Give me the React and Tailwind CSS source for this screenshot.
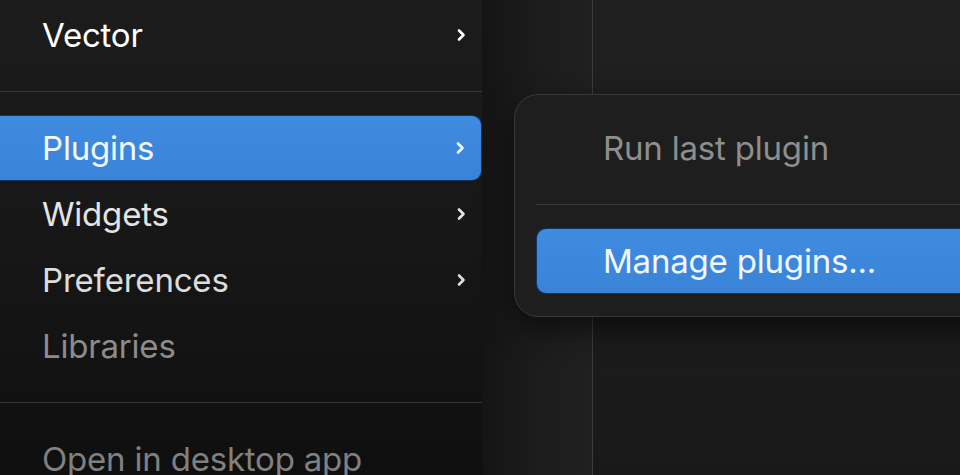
import React from 'react';

const font = { fontFamily: 'Inter, "Noto Sans", sans-serif' };

function Chevron() {
  return (
    <svg width="10" height="14" viewBox="0 0 10 14" fill="none" className="shrink-0">
      <path d="M3 2.5l4.5 4.5L3 11.5" stroke="currentColor" strokeWidth="2.6" strokeLinecap="round" strokeLinejoin="round" />
    </svg>
  );
}

function Row({ label, tone = 'text-[#ececec]', active = false, arrow = false }) {
  return (
    <div
      className={
        'h-[66px] flex items-center justify-between pl-[42px] pr-[16px] rounded-r-[10px] ' +
        (active ? 'bg-gradient-to-b from-[#3f8be0] to-[#3a84d8] border-y border-r border-[#123563] text-[#f2f7ff]' : tone)
      }
    >
      <span className="text-[33px] leading-none tracking-[-0.2px]">{label}</span>
      {arrow && <Chevron />}
    </div>
  );
}

function Divider() {
  return <div className="my-[23px] h-px bg-[#363636]" />;
}

export default function App() {
  return (
    <div style={font} className="relative w-[960px] h-[475px] overflow-hidden bg-[#1d1d1d] flex">
      {/* menu principal */}
      <div className="w-[482px] shrink-0 pt-[2px] bg-gradient-to-b from-[#1c1c1c] via-[#171717] to-[#0f0f0f]">
        <Row label="Vector" tone="text-white" arrow />
        <Divider />
        <Row label="Plugins" active arrow />
        <Row label="Widgets" tone="text-[#e4e4e4]" arrow />
        <Row label="Preferences" tone="text-[#dcdcdc]" arrow />
        <Row label="Libraries" tone="text-[#8c8c8c]" />
        <Divider />
        <Row label="Open in desktop app" tone="text-[#808080]" />
      </div>

      {/* sombra do menu */}
      <div className="w-[110px] shrink-0 bg-gradient-to-r from-[#141414] via-[#1c1c1c] to-[#202020]" />
      <div className="w-px shrink-0 bg-[#3c3c3c]" />
      <div className="flex-1 bg-gradient-to-b from-[#202020] via-[#1d1d1d] to-[#191919]" />

      {/* submenu */}
      <div className="absolute left-[514px] top-[94px] w-[520px] h-[223px] rounded-[24px] border border-[#383838] bg-[#1e1e1e] shadow-[0_12px_30px_rgba(0,0,0,0.55)] pt-[20px] pl-[21px]">
        <div className="h-[66px] flex items-center pl-[67px] text-[#8e8e8e]">
          <span className="text-[33px] leading-none tracking-[-0.2px]">Run last plugin</span>
        </div>
        <div className="my-[23px] h-px bg-[#3a3a3a]" />
        <div className="h-[66px] flex items-center pl-[66px] rounded-l-[10px] bg-gradient-to-b from-[#3f8be0] to-[#3a84d8] border-y border-l border-[#123563] text-[#f2f7ff]">
          <span className="text-[33px] leading-none tracking-[-0.2px]">Manage plugins...</span>
        </div>
      </div>
    </div>
  );
}
